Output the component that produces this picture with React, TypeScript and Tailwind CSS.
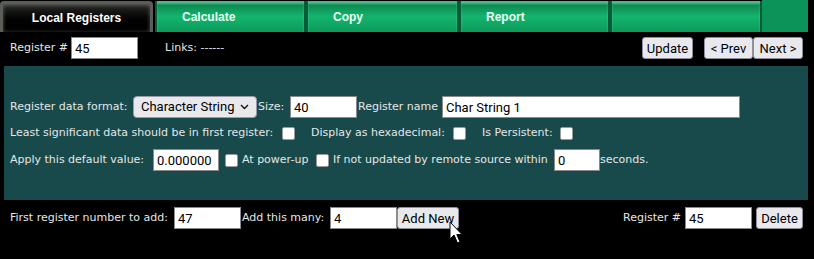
import React from "react";

const label = "text-[11px] text-[#e6e6e6] whitespace-nowrap [font-family:'DejaVu_Sans',Verdana,sans-serif]";
const field =
  "h-[22px] bg-white border border-[#8a8a8a] px-[3px] text-[13px] text-black outline-none [font-family:Roboto,Tahoma,sans-serif]";
const btn =
  "h-[22px] rounded-[3px] border border-[#8f8f9d] bg-[#e9e9ed] px-0 text-[13px] leading-none text-black whitespace-nowrap flex items-center justify-center [font-family:Roboto,Tahoma,sans-serif]";

function Check({ className = "" }: { className?: string }) {
  return (
    <span
      className={`inline-block w-[13px] h-[13px] bg-white border border-[#9a9a9a] rounded-[2px] ${className}`}
    />
  );
}

function Tab({ title, active, w }: { title?: string; active?: boolean; w: string }) {
  if (active) {
    return (
      <div
        className={`${w} h-[31px] flex items-center justify-center rounded-t-[4px] border-t-[3px] border-x-[3px] border-[#5a5d58] bg-gradient-to-b from-[#2a2b29] via-[#050505] to-black shadow-[inset_0_1px_4px_rgba(160,165,150,0.5)]`}
      >
        <span className="text-[12px] font-bold text-white [font-family:'Liberation_Sans',Arial,sans-serif]">
          {title}
        </span>
      </div>
    );
  }
  return (
    <div
      className={`${w} h-[31px] flex items-center pl-[25px] border-x-2 border-[#075c36] bg-gradient-to-b from-[#0a7a48] via-[#14b46d] to-[#0c9a5b] shadow-[inset_0_3px_2px_rgba(120,230,170,0.6)]`}
    >
      <span className="text-[12px] font-bold text-[#eafff3] [font-family:'Liberation_Sans',Arial,sans-serif]">
        {title}
      </span>
    </div>
  );
}

export default function App() {
  return (
    <div className="relative w-[814px] h-[259px] bg-black overflow-hidden">
      {/* tab strip */}
      <div className="flex items-end h-[32px] pr-[6px]">
        <Tab title="Local Registers" active w="w-[153px]" />
        <div className="w-[2px]" />
        <Tab title="Calculate" w="w-[151px]" />
        <Tab title="Copy" w="w-[153px]" />
        <Tab title="Report" w="w-[151px]" />
        <Tab w="w-[152px]" />
        <div className="flex-1 h-[32px] bg-[#0b935a]" />
      </div>

      {/* register selector */}
      <div className="flex items-center h-[24px] mt-[4px] pl-[10px] pr-[11px]">
        <span className={`${label} w-[60px]`}>Register #</span>
        <input className={`${field} w-[67px] ml-[1px]`} defaultValue="45" />
        <span className={`${label} ml-[27px]`}>Links: ------</span>
        <button className={`${btn} ml-auto w-[51px]`}>Update</button>
        <button className={`${btn} ml-[11px] w-[49px]`}>&lt; Prev</button>
        <button className={`${btn} w-[50px]`}>Next &gt;</button>
      </div>

      {/* register details panel */}
      <div className="ml-[4px] mr-[6px] mt-[6px] h-[134px] bg-[#184a4b] pt-[30px] pl-[6px] flex flex-col">
        <div className="flex items-center h-[22px]">
          <span className={`${label} w-[123px]`}>Register data format:</span>
          <div className="w-[124px] h-[22px] rounded-[4px] border border-[#9a9aa6] bg-[#e9e9ed] flex items-center pl-[7px] pr-[7px] justify-between">
            <span className="text-[13px] text-black [font-family:Roboto,Tahoma,sans-serif] whitespace-nowrap">
              Character String
            </span>
            <svg width="9" height="6" viewBox="0 0 9 6">
              <path d="M1 1l3.5 3.5L8 1" stroke="#111" strokeWidth="1.4" fill="none" />
            </svg>
          </div>
          <span className={`${label} ml-[1px] w-[32px]`}>Size:</span>
          <input className={`${field} w-[67px]`} defaultValue="40" />
          <span className={`${label} ml-[1px] w-[84px]`}>Register name</span>
          <input className={`${field} w-[298px]`} defaultValue="Char String 1" />
        </div>

        <div className="flex items-center h-[16px] mt-[7px]">
          <span className={`${label} w-[272px]`}>Least significant data should be in first register:</span>
          <Check />
          <span className={`${label} ml-[16px] w-[142px]`}>Display as hexadecimal:</span>
          <Check />
          <span className={`${label} ml-[16px] w-[78px]`}>Is Persistent:</span>
          <Check />
        </div>

        <div className="flex items-center h-[22px] mt-[8px]">
          <span className={`${label} w-[143px]`}>Apply this default value:</span>
          <input className={`${field} w-[66px]`} defaultValue="0.000000" />
          <Check className="ml-[6px]" />
          <span className={`${label} ml-[4px] w-[74px]`}>At power-up</span>
          <Check />
          <span className={`${label} ml-[4px] w-[221px]`}>If not updated by remote source within</span>
          <input className={`${field} w-[46px]`} defaultValue="0" />
          <span className={label}>seconds.</span>
        </div>
      </div>

      {/* add / delete */}
      <div className="flex items-center h-[22px] mt-[7px] pl-[10px] pr-[11px]">
        <span className={`${label} w-[164px]`}>First register number to add:</span>
        <input className={`${field} w-[67px]`} defaultValue="47" />
        <span className={`${label} ml-[1px] w-[88px]`}>Add this many:</span>
        <input className={`${field} w-[67px]`} defaultValue="4" />
        <button className={`${btn} w-[62px] bg-[#d0d0d7] border-[#6f6f80]`}>Add New</button>
        <span className={`${label} ml-auto w-[62px]`}>Register #</span>
        <input className={`${field} w-[67px]`} defaultValue="45" />
        <button className={`${btn} ml-[4px] w-[47px]`}>Delete</button>
      </div>

      {/* mouse pointer */}
      <svg
        className="absolute left-[449px] top-[221px]"
        width="16"
        height="25"
        viewBox="0 0 16 25"
      >
        <path
          d="M1 1 L1 18 L5 14 L8.5 22 L11 21 L7.8 13.5 L13 13.5 Z"
          fill="#fff"
          stroke="#000"
          strokeWidth="1"
          strokeLinejoin="round"
        />
      </svg>
    </div>
  );
}
